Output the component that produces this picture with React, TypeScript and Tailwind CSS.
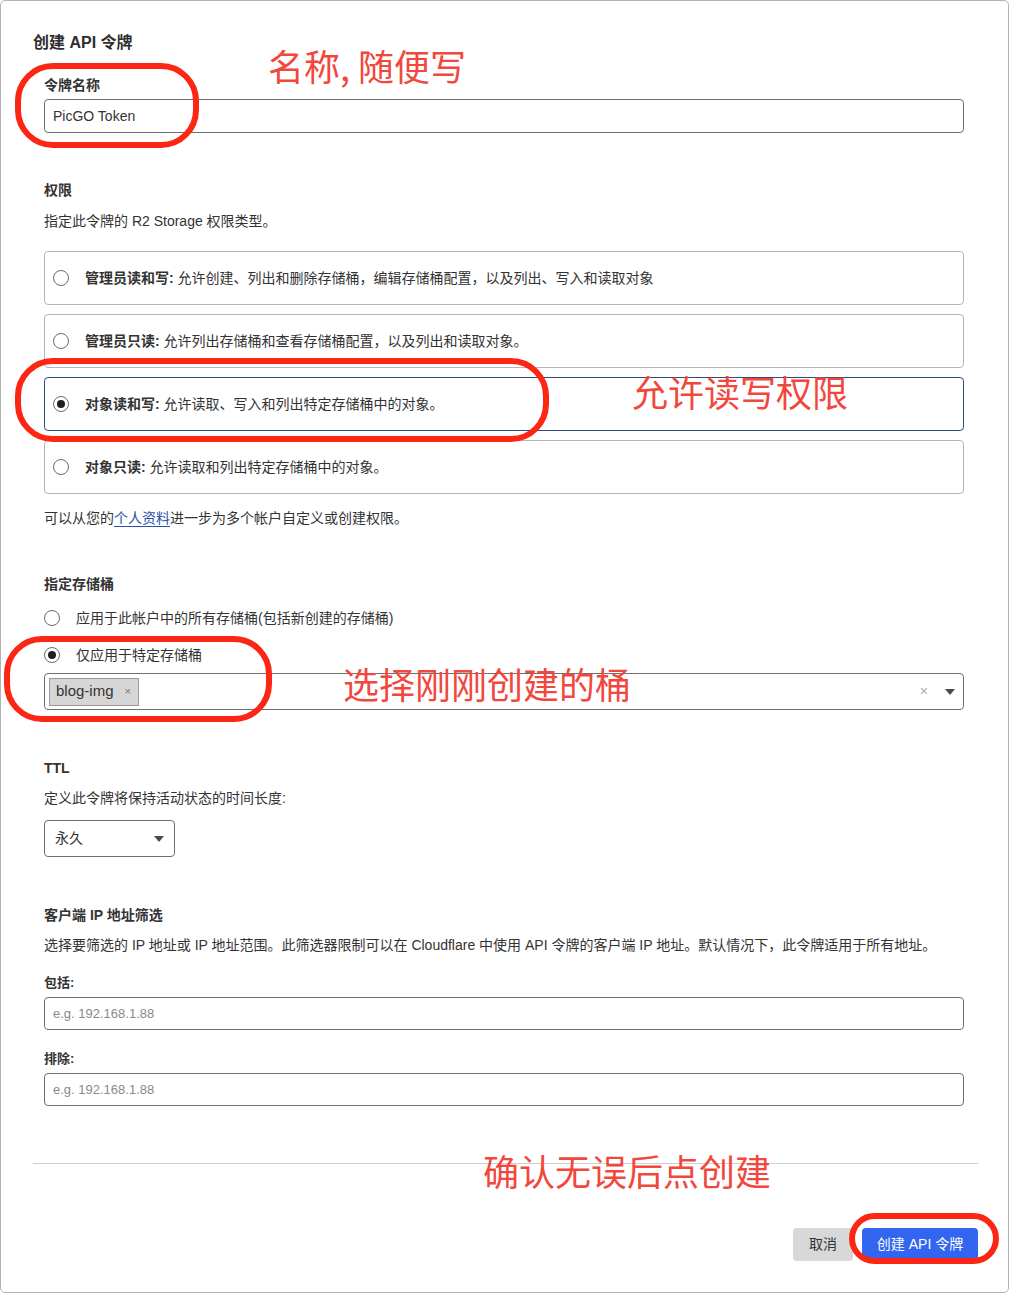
const font = { fontFamily: '"Liberation Sans", "Noto Sans CJK SC", sans-serif' };
const redFont = { fontFamily: '"Noto Sans CJK SC", sans-serif' };

function Radio({ checked }: { checked?: boolean }) {
    return (
        <span className="flex justify-center items-center w-4 h-4 shrink-0 rounded-full border border-[#6b6b6b] bg-white">
            {checked && <span className="w-2 h-2 rounded-full bg-[#1f1f1f]" />}
        </span>
    );
}

function Caret() {
    return (
        <svg width="10" height="6" viewBox="0 0 10 6">
            <path d="M0 0 L10 0 L5 6 Z" fill="#4a4a4a" />
        </svg>
    );
}

const options = [
    { title: "管理员读和写:", text: "允许创建、列出和删除存储桶，编辑存储桶配置，以及列出、写入和读取对象" },
    { title: "管理员只读:", text: "允许列出存储桶和查看存储桶配置，以及列出和读取对象。" },
    { title: "对象读和写:", text: "允许读取、写入和列出特定存储桶中的对象。", checked: true },
    { title: "对象只读:", text: "允许读取和列出特定存储桶中的对象。" },
];

export default function App() {
    return (
        <div className="w-[1010px] h-[1294px] bg-white text-[#333]" style={font}>
            <div className="relative w-[1009px] h-[1293px] border border-[#b3b3b3] rounded-[5px] pt-[32px] pl-[32px] pr-[30px]">
                <h1 className="text-[16px] leading-[20px] font-semibold text-[#2e2e2e]">创建 API 令牌</h1>

                <div className="pl-[11px] pr-[14px]">
                    {/* token name */}
                    <div className="mt-[22px] text-[14px] leading-[20px] font-semibold">令牌名称</div>
                    <div className="mt-[4px] h-[34px] flex items-center px-[8px] border border-[#707070] rounded-[4px] text-[14px]">
                        PicGO Token
                    </div>

                    {/* permissions */}
                    <div className="mt-[47px] text-[14px] leading-[20px] font-semibold">权限</div>
                    <div className="mt-[11px] text-[14px] leading-[20px]">指定此令牌的 R2 Storage 权限类型。</div>

                    <div className="mt-[20px] flex flex-col gap-[9px]">
                        {options.map((o) => (
                            <div
                                key={o.title}
                                className={`h-[54px] flex items-center gap-4 pl-[8px] rounded-[4px] border ${o.checked ? "border-[#2d4a7c]" : "border-[#b5b5b5]"}`}
                            >
                                <Radio checked={o.checked} />
                                <span className="text-[14px] leading-[20px]">
                                    <span className="font-semibold">{o.title}</span> {o.text}
                                </span>
                            </div>
                        ))}
                    </div>

                    <div className="mt-[14px] text-[14px] leading-[20px]">
                        可以从您的<span className="text-[#2b4fa8] underline underline-offset-[3px]">个人资料</span>进一步为多个帐户自定义或创建权限。
                    </div>

                    {/* buckets */}
                    <div className="mt-[46px] text-[14px] leading-[20px] font-semibold">指定存储桶</div>
                    <div className="mt-[14px] flex items-center gap-4 text-[14px] leading-[20px]">
                        <Radio />
                        <span>应用于此帐户中的所有存储桶(包括新创建的存储桶)</span>
                    </div>
                    <div className="mt-[17px] flex items-center gap-4 text-[14px] leading-[20px]">
                        <Radio checked />
                        <span>仅应用于特定存储桶</span>
                    </div>
                    <div className="mt-[8px] h-[37px] flex items-center pl-[4px] pr-[8px] border border-[#707070] rounded-[4px]">
                        <span className="h-[28px] flex items-center gap-[11px] pl-[6px] pr-[7px] border border-[#9a9a9a] bg-[#d6d6d6] text-[15px]">
                            blog-img
                            <span className="text-[11px] text-[#777]">×</span>
                        </span>
                        <span className="ml-auto text-[14px] text-[#aaa]">×</span>
                        <span className="ml-[17px] flex items-center"><Caret /></span>
                    </div>

                    {/* TTL */}
                    <div className="mt-[48px] text-[14px] leading-[20px] font-semibold">TTL</div>
                    <div className="mt-[10px] text-[14px] leading-[20px]">定义此令牌将保持活动状态的时间长度:</div>
                    <div className="mt-[12px] w-[131px] h-[37px] flex items-center justify-between pl-[10px] pr-[10px] border border-[#707070] rounded-[4px] text-[14px]">
                        永久
                        <Caret />
                    </div>

                    {/* ip filter */}
                    <div className="mt-[48px] text-[14px] leading-[20px] font-semibold">客户端 IP 地址筛选</div>
                    <div className="mt-[10px] text-[14px] leading-[20px]">
                        选择要筛选的 IP 地址或 IP 地址范围。此筛选器限制可以在 Cloudflare 中使用 API 令牌的客户端 IP 地址。默认情况下，此令牌适用于所有地址。
                    </div>
                    <div className="mt-[18px] text-[13px] leading-[20px] font-semibold">包括:</div>
                    <div className="mt-[4px] h-[33px] flex items-center px-[8px] border border-[#707070] rounded-[4px] text-[13px] text-[#8a8a8a]">
                        e.g. 192.168.1.88
                    </div>
                    <div className="mt-[19px] text-[13px] leading-[20px] font-semibold">排除:</div>
                    <div className="mt-[4px] h-[33px] flex items-center px-[8px] border border-[#707070] rounded-[4px] text-[13px] text-[#8a8a8a]">
                        e.g. 192.168.1.88
                    </div>
                </div>

                <div className="mt-[57px] h-px bg-[#cfcfcf]" />

                <div className="mt-[64px] flex justify-end gap-[9px]">
                    <button className="w-[60px] h-[33px] rounded-[4px] bg-[#d8d8d8] text-[14px] text-[#333]">取消</button>
                    <button className="w-[116px] h-[33px] rounded-[4px] bg-[#3366f0] text-[14px] text-white">创建 API 令牌</button>
                </div>

                {/* red annotations */}
                <div className="absolute left-[14px] top-[62px] w-[184px] h-[85px] border-[6px] border-[#fb2614] rounded-[38px]" />
                <div className="absolute left-[14px] top-[357px] w-[534px] h-[84px] border-[6px] border-[#fb2614] rounded-[38px]" />
                <div className="absolute left-[3px] top-[635px] w-[268px] h-[86px] border-[6px] border-[#fb2614] rounded-[38px]" />
                <div className="absolute left-[848px] top-[1212px] w-[150px] h-[51px] border-[6px] border-[#fb2614] rounded-[26px]" />

                <div className="absolute left-[267px] top-[44px] text-[36px] leading-[40px] text-[#f2473c]" style={redFont}>名称, 随便写</div>
                <div className="absolute left-[631px] top-[370px] text-[36px] leading-[40px] text-[#f2473c]" style={redFont}>允许读写权限</div>
                <div className="absolute left-[342px] top-[662px] text-[36px] leading-[40px] text-[#f2473c]" style={redFont}>选择刚刚创建的桶</div>
                <div className="absolute left-[482px] top-[1149px] text-[36px] leading-[40px] text-[#f2473c]" style={redFont}>确认无误后点创建</div>
            </div>
        </div>
    );
}
